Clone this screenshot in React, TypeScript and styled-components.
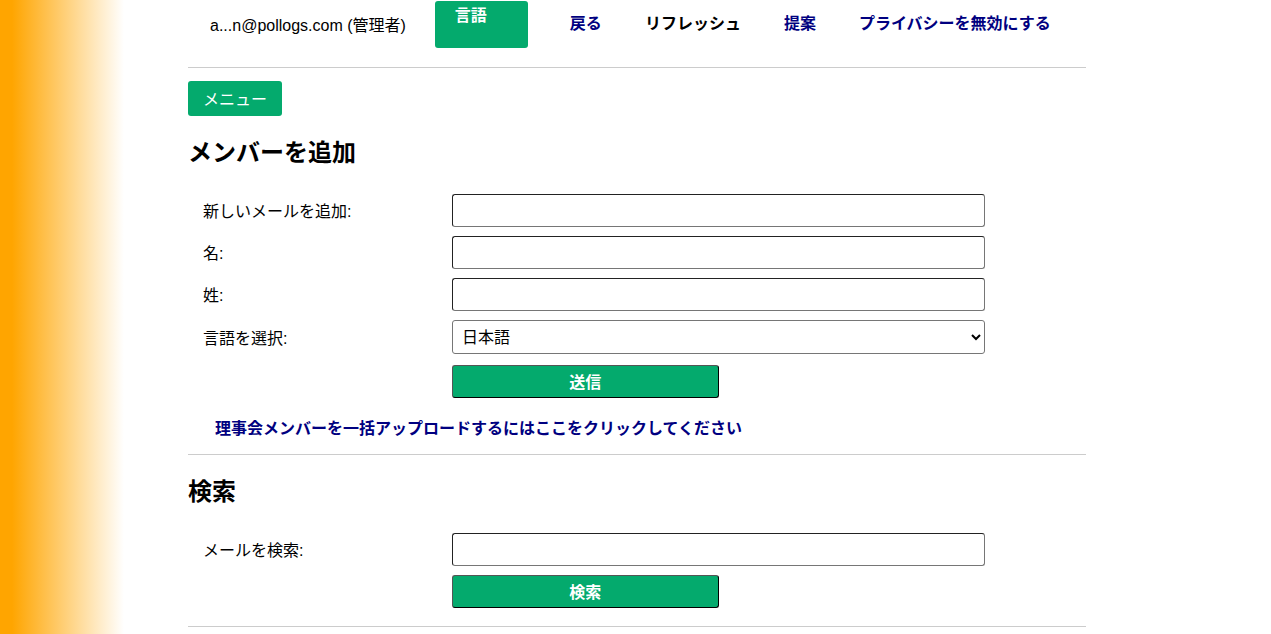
import React from "react";
import styled, { createGlobalStyle, css } from "styled-components";

const GREEN = "#04aa6d";

const GlobalStyle = createGlobalStyle`
  *, *::before, *::after { box-sizing: border-box; }
  body {
    margin: 0;
    min-height: 100vh;
    background: linear-gradient(to right, orange 12px, white 124px);
    color: #000;
    font-family: "Liberation Sans", "Noto Sans CJK JP", sans-serif;
    font-size: 16px;
    line-height: 24px;
  }
  button, input, select { font: inherit; }
`;

const Page = styled.div`
  margin: 0 185px 0 188px;
`;

const TopBar = styled.header`
  display: flex;
  align-items: flex-start;
  height: 68px;
  padding: 1px 0 0 22px;
  border-bottom: 1px solid #ccc;
  white-space: nowrap;
`;

const Account = styled.span`
  padding-top: 13px;
`;

const LanguageButton = styled.button`
  display: flex;
  align-items: flex-start;
  width: 93px;
  height: 47px;
  margin-left: 29px;
  padding: 3px 20px;
  border: 0;
  border-radius: 3px;
  background: ${GREEN};
  color: #fff;
  font-weight: bold;
  cursor: pointer;
`;

const Nav = styled.nav`
  display: flex;
  gap: 43px;
  margin-left: 42px;
  padding-top: 11px;
`;

const NavLink = styled.a<{ $plain?: boolean }>`
  color: ${({ $plain }) => ($plain ? "#000" : "navy")};
  font-weight: bold;
  text-decoration: none;
`;

const MenuButton = styled.button`
  display: block;
  height: 35px;
  margin-top: 13px;
  padding: 2px 15px 0;
  border: 0;
  border-radius: 3px;
  background: ${GREEN};
  color: #fff;
  cursor: pointer;
`;

const Section = styled.section`
  padding-bottom: 13px;
  border-bottom: 1px solid #ccc;
`;

const Heading = styled.h2`
  margin: 0;
  padding: 19px 0 23px;
  font-size: 24px;
  line-height: 36px;
`;

const Form = styled.form`
  display: grid;
  grid-template-columns: 249px 1fr;
  row-gap: 9px;
  padding: 0 101px 5px 15px;
`;

const Label = styled.label`
  align-self: center;
  padding-top: 2px;
`;

const control = css`
  width: 100%;
  height: 33px;
  border: 1px solid #767676;
  border-radius: 3px;
  background: #fff;
  color: #000;
`;

const TextInput = styled.input`
  ${control}
  padding: 0 8px;
  border-color: #222 #767676 #767676 #222;
`;

const Select = styled.select`
  ${control}
  height: 34px;
  margin-bottom: 2px;
  padding: 1px 0 0 5px;
`;

const SubmitButton = styled.button`
  grid-column: 2;
  width: 50%;
  height: 33px;
  padding: 3px 0 0;
  border: 1px solid;
  border-color: #555 #000 #000 #555;
  border-radius: 3px;
  background: ${GREEN};
  color: #fff;
  font-weight: bold;
  cursor: pointer;
`;

const BulkLink = styled(NavLink)`
  display: block;
  margin: 14px 0 0 27px;
`;

export default function App() {
  return (
    <>
      <GlobalStyle />
      <Page>
        <TopBar>
          <Account>a...n@pollogs.com (管理者)</Account>
          <LanguageButton type="button">言語</LanguageButton>
          <Nav>
            <NavLink href="#back">戻る</NavLink>
            <NavLink href="#refresh" $plain>リフレッシュ</NavLink>
            <NavLink href="#suggest">提案</NavLink>
            <NavLink href="#privacy">プライバシーを無効にする</NavLink>
          </Nav>
        </TopBar>
        <MenuButton type="button">メニュー</MenuButton>
        <main>
          <Section>
            <Heading>メンバーを追加</Heading>
            <Form onSubmit={(e) => e.preventDefault()}>
              <Label htmlFor="email">新しいメールを追加:</Label>
              <TextInput id="email" type="text" />
              <Label htmlFor="first">名:</Label>
              <TextInput id="first" type="text" />
              <Label htmlFor="last">姓:</Label>
              <TextInput id="last" type="text" />
              <Label htmlFor="language">言語を選択:</Label>
              <Select id="language" defaultValue="ja">
                <option value="ja">日本語</option>
              </Select>
              <SubmitButton type="submit">送信</SubmitButton>
            </Form>
            <BulkLink href="#bulk">
              理事会メンバーを一括アップロードするにはここをクリックしてください
            </BulkLink>
          </Section>
          <Section>
            <Heading>検索</Heading>
            <Form onSubmit={(e) => e.preventDefault()}>
              <Label htmlFor="search">メールを検索:</Label>
              <TextInput id="search" type="text" />
              <SubmitButton type="submit">検索</SubmitButton>
            </Form>
          </Section>
        </main>
      </Page>
    </>
  );
}
